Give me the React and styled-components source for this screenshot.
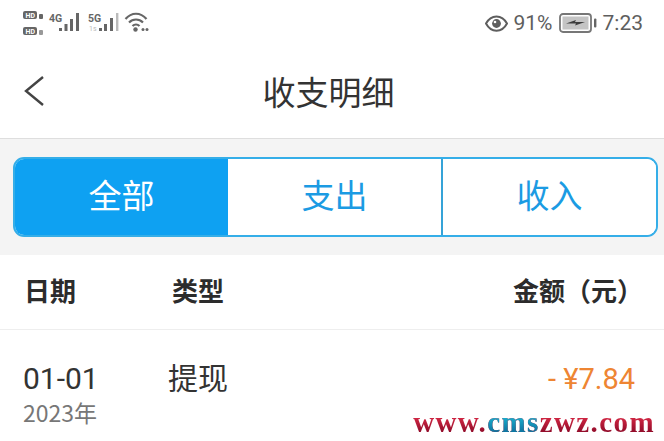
import styled, { createGlobalStyle } from "styled-components"

const GlobalStyle = createGlobalStyle`
  html, body {
    margin: 0;
    padding: 0;
    background: #fff;
  }
  body {
    font-family: "Noto Sans CJK SC", "Roboto", sans-serif;
  }
`

const Page = styled.div`
  width: 664px;
  height: 441px;
  overflow: hidden;
  background: #fff;
  position: relative;
`

const StatusBar = styled.div`
  height: 46px;
  display: flex;
  align-items: center;
  justify-content: space-between;
  padding: 0 21px 0 23px;
  color: #5c5c5c;
`

const StatusGroup = styled.div`
  display: flex;
  align-items: center;
  gap: 6px;
`

const StatusText = styled.span`
  font-family: "Roboto", sans-serif;
  font-size: 21px;
  line-height: 24px;
  color: #5e5e5e;
`

const NavBar = styled.div`
  height: 93px;
  display: flex;
  align-items: center;
  justify-content: center;
  position: relative;
  padding-right: 7px;
  border-bottom: 1px solid #dedede;
  box-sizing: border-box;
`

const BackIcon = styled.svg`
  position: absolute;
  left: 23px;
  top: 29px;
`

const Title = styled.h1`
  margin: 0 0 2px;
  font-size: 33px;
  line-height: 46px;
  font-weight: 400;
  color: #333;
`

const TabsBand = styled.div`
  background: #f4f4f4;
  height: 116px;
  padding: 18px 6px 18px 13px;
  box-sizing: border-box;
`

const Tabs = styled.div`
  display: flex;
  height: 80px;
  border: 2px solid #35aee8;
  border-radius: 11px;
  overflow: hidden;
  background: #fff;
  box-sizing: border-box;
`

const Tab = styled.div`
  flex: 1;
  display: flex;
  align-items: center;
  justify-content: center;
  padding-bottom: 6px;
  font-size: 33px;
  background: ${props => (props.$active ? "#0ea1f2" : "#fff")};
  color: ${props => (props.$active ? "#fff" : "#1b9be3")};
  border-left: ${props => (props.$divider ? "2px solid #35a3d8" : "none")};
`

const HeaderRow = styled.div`
  height: 75px;
  display: grid;
  grid-template-columns: 148px 1fr auto;
  align-items: center;
  padding: 0 21px 5px 24px;
  border-bottom: 1px solid #eeeeee;
  box-sizing: border-box;
  font-size: 26px;
  font-weight: 700;
  color: #2c2c2c;
`

const DataRow = styled.div`
  display: grid;
  grid-template-columns: 145px 1fr auto;
  padding: 30px 29px 0 23px;
`

const DateCell = styled.div`
  display: flex;
  flex-direction: column;
`

const DateMain = styled.span`
  font-family: "Roboto", sans-serif;
  font-size: 30px;
  line-height: 38px;
  color: #333;
`

const DateYear = styled.span`
  font-size: 23px;
  line-height: 29px;
  color: #777;
`

const TypeCell = styled.span`
  font-size: 30px;
  line-height: 36px;
  color: #333;
  margin-top: -2px;
`

const Amount = styled.span`
  font-family: "Roboto", sans-serif;
  font-size: 29px;
  line-height: 38px;
  color: #ee8533;
`

const Watermark = styled.div`
  position: absolute;
  right: 9px;
  bottom: 3px;
  font-family: "Liberation Serif", serif;
  font-weight: 700;
  font-size: 29px;
  letter-spacing: 1.4px;
  line-height: 32px;
  background: linear-gradient(180deg, #e8304c 20%, #8c0a28 85%);
  -webkit-background-clip: text;
  background-clip: text;
  color: transparent;
`

const WatermarkCyan = styled.span`
  background: linear-gradient(180deg, #1fc0dc 20%, #0d6f9c 85%);
  -webkit-background-clip: text;
  background-clip: text;
  color: transparent;
`

// y values here are the page's own, the svg fills the status bar height
function SimIcons() {
  return (
    <svg width="130" height="46" viewBox="0 0 130 46" fill="#666">
      <rect x="0" y="11" width="14" height="8" rx="2" />
      <text x="2.5" y="17.5" fontSize="7" fontFamily="Roboto" fontWeight="700" fill="#fff">HD</text>
      <rect x="16" y="14" width="4" height="5" rx="1" />
      <rect x="0" y="27" width="14" height="8" rx="2" />
      <text x="2.5" y="33.5" fontSize="7" fontFamily="Roboto" fontWeight="700" fill="#fff">HD</text>
      <rect x="16" y="30" width="4" height="5" rx="1" fill="#999" />

      <text x="26" y="22" fontSize="10.5" fontFamily="Roboto" fontWeight="700">4G</text>
      <rect x="36" y="28" width="3" height="3" />
      <rect x="41.5" y="24" width="3" height="7" />
      <rect x="47" y="19" width="3" height="12" />
      <rect x="53" y="13" width="3" height="18" />

      <text x="65" y="22" fontSize="10.5" fontFamily="Roboto" fontWeight="700">5G</text>
      <text x="66" y="31" fontSize="7" fontFamily="Roboto" fill="#bbb">1s</text>
      <rect x="76" y="28" width="3" height="3" />
      <rect x="81" y="24" width="3" height="7" />
      <rect x="87" y="18" width="3" height="13" />
      <rect x="93" y="13" width="2.4" height="18" fill="#bbb" />

      <path d="M102.5 19c6-7 15-7 21 0M106 22.5c4-4 10-4 14 0M109.5 26c2-2 5-2 7 0" fill="none" stroke="#666" strokeWidth="2.2" />
      <circle cx="112.5" cy="29.5" r="2.2" />
      <circle cx="120" cy="29.5" r="1.5" />
      <circle cx="124" cy="29.5" r="1.5" />
    </svg>
  )
}

function EyeIcon() {
  return (
    <svg width="23" height="17" viewBox="0 0 23 17">
      <path d="M1 8.5c5-9.5 16-9.5 21 0c-5 9.5-16 9.5-21 0z" fill="none" stroke="#5e5e5e" strokeWidth="2" />
      <circle cx="11.5" cy="8.5" r="4.4" fill="#5e5e5e" />
      <circle cx="10" cy="7" r="1.3" fill="#fff" />
    </svg>
  )
}

function BatteryIcon() {
  return (
    <svg width="38" height="20" viewBox="0 0 38 20">
      <rect x="1" y="1" width="31" height="18" rx="3" fill="#fff" stroke="#777" strokeWidth="1.8" />
      <rect x="3.5" y="3.5" width="26" height="13" fill="#c4c4c4" />
      <path d="M7 10.5l10-3.5-1 2h10l-10 3.5 1-2z" fill="#3c3c3c" />
      <rect x="35" y="5.5" width="2.4" height="9" rx="1" fill="#666" />
    </svg>
  )
}

export default function App() {
  return (
    <Page>
      <GlobalStyle />
      <StatusBar>
        <SimIcons />
        <StatusGroup>
          <EyeIcon />
          <StatusText>91%</StatusText>
          <BatteryIcon />
          <StatusText>7:23</StatusText>
        </StatusGroup>
      </StatusBar>
      <NavBar>
        <BackIcon width="22" height="32" viewBox="0 0 22 32">
          <path d="M20 2L3 16l17 14" fill="none" stroke="#444" strokeWidth="2.4" />
        </BackIcon>
        <Title>收支明细</Title>
      </NavBar>
      <TabsBand>
        <Tabs>
          <Tab $active>全部</Tab>
          <Tab>支出</Tab>
          <Tab $divider>收入</Tab>
        </Tabs>
      </TabsBand>
      <HeaderRow>
        <span>日期</span>
        <span>类型</span>
        <span>金额（元）</span>
      </HeaderRow>
      <DataRow>
        <DateCell>
          <DateMain>01-01</DateMain>
          <DateYear>2023年</DateYear>
        </DateCell>
        <TypeCell>提现</TypeCell>
        <Amount>- ¥7.84</Amount>
      </DataRow>
      <Watermark>
        www.<WatermarkCyan>cms</WatermarkCyan>zwz.com
      </Watermark>
    </Page>
  )
}
